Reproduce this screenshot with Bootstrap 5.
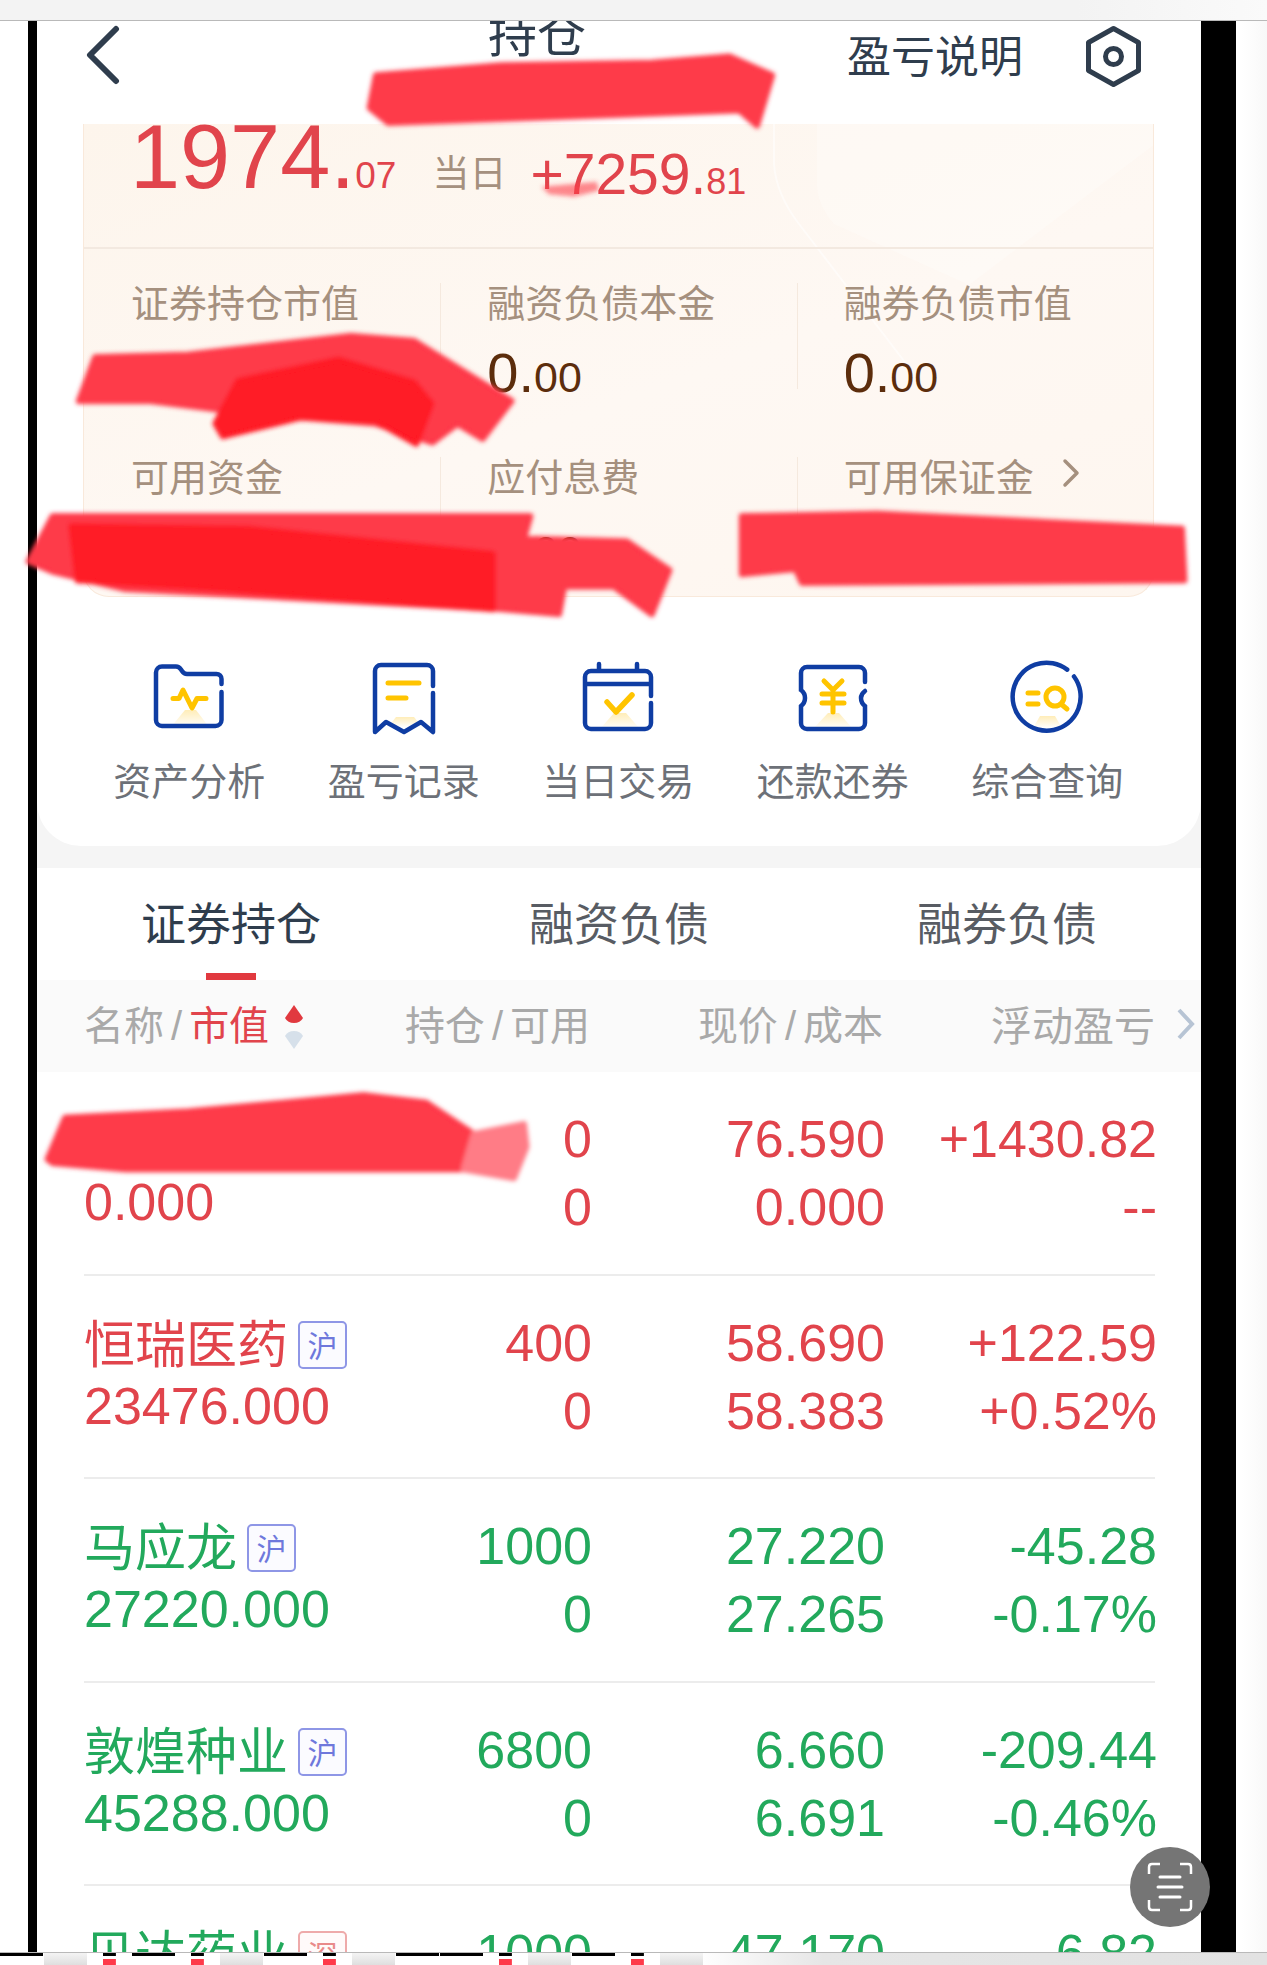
<!DOCTYPE html>
<html lang="en">
<head>
    <meta charset="UTF-8">
    <meta name="viewport" content="width=device-width, initial-scale=1.0">
    <title>持仓</title>
    <link href="https://cdn.jsdelivr.net/npm/bootstrap@5.3.1/dist/css/bootstrap.min.css" rel="stylesheet">
    <style>
        html, body { height: 100%; }
        body {
            width: 1267px;
            height: 1965px;
            overflow: hidden;
            background: #fff;
            font-family: "Liberation Sans", "Noto Sans CJK SC", sans-serif;
            font-weight: 400;
            position: relative;
        }
        .cjk { font-family: "Noto Sans CJK SC", sans-serif; font-weight: 400; }

        .strip-top { height: 21px; background: linear-gradient(90deg, #f3f3f3 85%, #fafafa 100%); border-bottom: 1px solid #b9b9b9; }
        .shell { height: 1931px; padding-left: 28px; background: linear-gradient(90deg, #fff 98%, #f8f8f8 100%); }
        .phone { width: 1173px; height: 1931px; border-left: 9px solid #000; overflow: hidden; background: #fff; }
        .edge { width: 35px; background: #000; }
        .strip-bottom { height: 13px; background: linear-gradient(90deg, #fff 55%, #e6e6e6 65%, #e2e2e2 100%); border-top: 1px solid #b9b9b9; overflow: hidden; }
        .thumb { width: 43px; height: 13px; background: linear-gradient(180deg, #000 0 3px, #fff 3px); flex: none; margin-right: 1px; }
        .thumb-red { background: linear-gradient(180deg, #000 0 3px, #fff 3px 6px, #fe3a4a 6px); background-size: 30% 100%; background-repeat: no-repeat; background-position: center; background-color: #fff; }
        .thumb-pale { background: linear-gradient(180deg, #f4f4f4, #ddd); }

        .top-head { height: 103px; color: #2f3d4d; padding-left: 48px; background: #fff; }
        .page-name { width: 98px; margin-left: 367px; margin-top: -26px; font-size: 49px; line-height: 72px; text-align: center; }
        .head-link { margin-left: 261px; font-size: 44px; line-height: 66px; margin-top: 0; white-space: nowrap; }
        .hex-ico { margin-left: 62px; }

        .wealth { width: 1071px; height: 473px; margin-left: 46px; border: 1px solid #f9e9db; border-top: 0; border-radius: 0 0 26px 26px; background: linear-gradient(160deg, #fdf5ec 0%, #fef8f3 55%, #fef6ef 100%); overflow: hidden; }
        .wealth-deco { position: absolute; left: 0; top: 0; }
        .wealth-top { height: 125px; border-bottom: 2px solid #f3e9e0; padding-left: 46px; overflow: hidden; white-space: nowrap; color: #e1444c; position: relative; }
        .profit { line-height: 88px; margin-top: -11px; }
        .big-a { font-size: 90px; }
        .big-b { font-size: 37px; }
        .day-tag { font-size: 37px; color: #a5907e; margin: 0 24px 0 36px; vertical-align: 1px; }
        .mid-a { font-size: 57px; vertical-align: -6px; }
        .mid-b { font-size: 36px; vertical-align: -6px; }

        .stat { height: 174px; padding-top: 33px; position: relative; }
        .stat-line { position: absolute; left: 0; top: 34px; height: 106px; border-left: 1px solid #f5e9de; }
        .stat-label { padding-left: 47px; font-size: 38px; line-height: 38px; color: #a5907e; white-space: nowrap; }
        .stat-num { padding-left: 47px; margin-top: 18px; font-size: 56px; line-height: 70px; color: #5c2d0c; }
        .stat-num small { font-size: 43px; }
        .stat-arrow { margin-left: 28px; vertical-align: 3px; }

        .tools { height: 249px; padding: 60px 44px 0 45px; background: #fff; border-radius: 0 0 44px 44px; position: relative; }
        .tools-wrap { background: #f5f5f5; padding-bottom: 22px; }
        .tool { width: 214.5px; }
        .tool-name { margin-top: 18px; font-size: 38px; line-height: 48px; color: #6d7178; }

        .tab-row { height: 112px; position: relative; }
        .tab-item { width: 388.5px; text-align: center; padding-top: 21px; font-size: 45px; line-height: 66px; color: #585c63; }
        .tab-on { color: #2f3d4d; position: relative; }
        .tab-on::after { content: ""; position: absolute; left: 169px; top: 105px; width: 50px; height: 7px; background: #e1393f; }

        .pos-grid { display: grid; grid-template-columns: 318px 190px 293px 272px; }
        .pos-head { height: 92px; background: #fafafa; padding-left: 47px; padding-bottom: 4px; align-items: center; font-size: 40px; color: #a9a9a9; }
        .pos-head .r { text-align: right; white-space: nowrap; padding-right: 2px; }
        .pos-head .r-wide { font-size: 41px; }
        .pos-head i { font-style: normal; margin: 0 7px; font-family: "Liberation Sans", sans-serif; }
        .cur-sort { color: #e1444c; }
        .sort-ico { margin-left: 14px; vertical-align: -9px; }
        .pos-head > div { position: relative; white-space: nowrap; }
        .more-ico { position: absolute; right: -39px; top: 14px; }

        .pos-row { height: 203.6px; margin: 0 46px 0 47px; padding-top: 33px; border-bottom: 2px solid #ececec; font-size: 52px; line-height: 68px; text-align: right; }
        .pos-row > div { white-space: nowrap; }
        .pos-row > div:first-child { text-align: left; }
        .up { color: #e1444c; }
        .down { color: #22a95c; }
        .stock { font-family: "Noto Sans CJK SC", sans-serif; font-weight: 400; font-size: 51px; height: 63px; line-height: 64px; }
        .mkt { display: inline-block; width: 49px; height: 48px; margin-left: 10px; border: 2px solid #8e96e6; border-radius: 5px; color: #6f78dc; font-size: 30px; line-height: 42px; text-align: center; vertical-align: 6px; background: #fbfbff; }
        .mkt-sz { border-color: #eeaaaa; color: #e98a8a; background: #fffafa; }

        .scan-btn { position: absolute; left: 1130px; top: 1847px; width: 80px; height: 80px; border-radius: 50%; background: #757575; }
        .ink { position: absolute; left: 0; top: 0; width: 1267px; height: 1965px; pointer-events: none; }
        .ink path { stroke-width: 5; stroke-linejoin: round; }
    </style>
</head>
<body>
    <div class="strip-top"></div>
    <div class="shell d-flex">
        <div class="phone">
            <!-- title bar -->
            <div class="top-head d-flex align-items-start">
                <svg class="mt-1" width="36" height="60" viewBox="0 0 36 60"><path d="M31 4 L5 30 L31 56" fill="none" stroke="#2f3d4d" stroke-width="6" stroke-linecap="round" stroke-linejoin="round"/></svg>
                <div class="page-name cjk">持仓</div>
                <div class="head-link cjk">盈亏说明</div>
                <svg class="hex-ico mt-1" width="57" height="63" viewBox="0 0 57 63"><path d="M28.5 3.5 L53.500 17.500 V45.500 L28.500 59.500 L3.500 45.500 V17.500 Z" fill="none" stroke="#2f3d4d" stroke-width="5" stroke-linejoin="round"/><circle cx="28.500" cy="31.500" r="8" fill="none" stroke="#2f3d4d" stroke-width="5"/></svg>
            </div>

            <!-- summary card -->
            <div class="wealth position-relative">
                <svg class="wealth-deco" width="1071" height="300" viewBox="0 0 1071 300"><path d="M733 0 V60 Q733 80 750 100 L885 161 L1071 20 V0 Z" fill="#fffdfb" opacity=".4"/><path d="M690 0 V40 Q692 70 715 100 L830 250" fill="none" stroke="#fff" stroke-width="2" opacity=".5"/></svg>
                <div class="wealth-top">
                    <div class="profit"><span class="big-a">1974.</span><span class="big-b">07</span><span class="day-tag cjk">当日</span><span class="mid-a">+7259.</span><span class="mid-b">81</span></div>
                </div>
                <div class="row g-0 position-relative">
                    <div class="col-4 stat">
                        <div class="stat-label cjk">证券持仓市值</div>
                    </div>
                    <div class="col-4 stat">
                        <div class="stat-line"></div>
                        <div class="stat-label cjk">融资负债本金</div>
                        <div class="stat-num">0.<small>00</small></div>
                    </div>
                    <div class="col-4 stat">
                        <div class="stat-line"></div>
                        <div class="stat-label cjk">融券负债市值</div>
                        <div class="stat-num">0.<small>00</small></div>
                    </div>
                    <div class="col-4 stat">
                        <div class="stat-label cjk">可用资金</div>
                    </div>
                    <div class="col-4 stat">
                        <div class="stat-line"></div>
                        <div class="stat-label cjk">应付息费</div>
                        <div class="stat-num">0.<small>00</small></div>
                    </div>
                    <div class="col-4 stat">
                        <div class="stat-line"></div>
                        <div class="stat-label cjk">可用保证金<svg class="stat-arrow" width="18" height="30" viewBox="0 0 18 30"><path d="M3 3 L15 15 L3 27" fill="none" stroke="#a5907e" stroke-width="3.500" stroke-linecap="round" stroke-linejoin="round"/></svg></div>
                    </div>
                </div>
            </div>

            <div class="tools-wrap">
                <!-- shortcuts -->
                <div class="tools d-flex">
                    <svg width="0" height="0" class="position-absolute"><defs><linearGradient id="fade" x1="0" y1="0" x2="0" y2="1"><stop offset="0" stop-color="#ffedb8"/><stop offset="1" stop-color="#fff"/></linearGradient></defs></svg>
                    <div class="tool text-center">
                        <svg width="80" height="80" viewBox="0 0 80 80"><path d="M22 70 L36 53 H47 L60 70 Z" fill="url(#fade)"/><path d="M72.500 27 V22 a5 5 0 0 0 -5 -5 H38 q-3 0 -5 -3 l-1 -1.500 q-2 -3 -5 -3 H13 a6 6 0 0 0 -6 6 V63 a6 6 0 0 0 6 6 H66.500 a6 6 0 0 0 6 -6 V35" fill="none" stroke="#0f3da3" stroke-width="4.500" stroke-linecap="round"/><path d="M24 41.500 H30 L34 33 L43 51 L48 41.500 H57" fill="none" stroke="#ffc400" stroke-width="5" stroke-linejoin="round" stroke-linecap="round"/></svg>
                        <div class="tool-name cjk">资产分析</div>
                    </div>
                    <div class="tool text-center">
                        <svg width="80" height="80" viewBox="0 0 80 80"><path d="M24 70 L32 60 H50 L58 70 Z" fill="url(#fade)"/><path d="M69 29 V14 a6 6 0 0 0 -6 -6 H17 a6 6 0 0 0 -6 6 V75 L22 65 L40 75 L57 65 L69 75 V36" fill="none" stroke="#0f3da3" stroke-width="4.500" stroke-linecap="round" stroke-linejoin="round"/><path d="M24 26 H55 M24 41 H42" fill="none" stroke="#ffc400" stroke-width="5" stroke-linecap="round"/></svg>
                        <div class="tool-name cjk">盈亏记录</div>
                    </div>
                    <div class="tool text-center">
                        <svg width="80" height="80" viewBox="0 0 80 80"><path d="M22 72 L36 56 H48 L62 72 Z" fill="url(#fade)"/><path d="M73 39 V20 a6 6 0 0 0 -6 -6 H13 a6 6 0 0 0 -6 6 V66 a6 6 0 0 0 6 6 H67 a6 6 0 0 0 6 -6 V46 M21 7 V14 M59 7 V14 M7 27 H73" fill="none" stroke="#0f3da3" stroke-width="4.500" stroke-linecap="round"/><path d="M29 45 L38 55 L54 38" fill="none" stroke="#ffc400" stroke-width="5.500" stroke-linecap="round" stroke-linejoin="round"/></svg>
                        <div class="tool-name cjk">当日交易</div>
                    </div>
                    <div class="tool text-center">
                        <svg width="80" height="80" viewBox="0 0 80 80"><path d="M20 72 L35 56 H46 L60 72 Z" fill="url(#fade)"/><path d="M72 25 V16 a6 6 0 0 0 -6 -6 H14 a6 6 0 0 0 -6 6 V33 q4 3 4 8 t-4 8 V66 a6 6 0 0 0 6 6 H66 a6 6 0 0 0 6 -6 V49 q-4 -3 -4 -8 q0 -4 4 -7" fill="none" stroke="#0f3da3" stroke-width="4.500" stroke-linecap="round"/><path d="M31 24 L40 33 L49 24 M40 33 V55 M29 37 H51 M29 46 H51" fill="none" stroke="#ffc400" stroke-width="5" stroke-linecap="round" stroke-linejoin="round"/></svg>
                        <div class="tool-name cjk">还款还券</div>
                    </div>
                    <div class="tool text-center">
                        <svg width="80" height="80" viewBox="0 0 80 80"><path d="M26 71 L33 59 H48 L55 71 Z" fill="url(#fade)"/><path d="M67 19.500 A34 34 0 1 1 60.200 12.600" fill="none" stroke="#0f3da3" stroke-width="4.500" stroke-linecap="round"/><path d="M21 36 H31 M21 47 H31" fill="none" stroke="#ffc400" stroke-width="5" stroke-linecap="round"/><circle cx="48" cy="40" r="9" fill="none" stroke="#ffc400" stroke-width="5"/><path d="M54 47 L60 52" stroke="#ffc400" stroke-width="5" stroke-linecap="round"/></svg>
                        <div class="tool-name cjk">综合查询</div>
                    </div>
                </div>
            </div>

            <!-- tabs -->
            <div class="tab-row d-flex cjk">
                <div class="tab-item tab-on">证券持仓</div>
                <div class="tab-item">融资负债</div>
                <div class="tab-item">融券负债</div>
            </div>

            <!-- positions -->
            <div class="pos-grid pos-head cjk">
                <div>名称<i>/</i><span class="cur-sort">市值</span><svg class="sort-ico" width="22" height="44" viewBox="0 0 22 44"><path d="M11 0 L20 13 A10 9 0 0 1 2 13 Z" fill="#e1393f"/><path d="M11 44 L20 31 A10 9 0 0 0 2 31 Z" fill="#d6e0ea"/></svg></div>
                <div class="r">持仓<i>/</i>可用</div>
                <div class="r">现价<i>/</i>成本</div>
                <div class="r r-wide">浮动盈亏<svg class="more-ico" width="20" height="34" viewBox="0 0 20 34"><path d="M3 3 L16 17 L3 31" fill="none" stroke="#b7c4d4" stroke-width="4"/></svg></div>
            </div>

            <div class="pos-grid pos-row up">
                <div><div class="stock"></div><div>0.000</div></div>
                <div>0<br>0</div>
                <div>76.590<br>0.000</div>
                <div>+1430.82<br>--</div>
            </div>
            <div class="pos-grid pos-row up">
                <div><div class="stock">恒瑞医药<span class="mkt">沪</span></div><div>23476.000</div></div>
                <div>400<br>0</div>
                <div>58.690<br>58.383</div>
                <div>+122.59<br>+0.52%</div>
            </div>
            <div class="pos-grid pos-row down">
                <div><div class="stock">马应龙<span class="mkt">沪</span></div><div>27220.000</div></div>
                <div>1000<br>0</div>
                <div>27.220<br>27.265</div>
                <div>-45.28<br>-0.17%</div>
            </div>
            <div class="pos-grid pos-row down">
                <div><div class="stock">敦煌种业<span class="mkt">沪</span></div><div>45288.000</div></div>
                <div>6800<br>0</div>
                <div>6.660<br>6.691</div>
                <div>-209.44<br>-0.46%</div>
            </div>
            <div class="pos-grid pos-row down">
                <div><div class="stock">贝达药业<span class="mkt mkt-sz">深</span></div></div>
                <div>1000</div>
                <div>47.170</div>
                <div>-6.82</div>
            </div>
        </div>
        <div class="edge"></div>
    </div>
    <div class="strip-bottom d-flex">
        <div class="thumb"></div><div class="thumb thumb-pale"></div><div class="thumb thumb-red"></div><div class="thumb"></div><div class="thumb thumb-red"></div><div class="thumb thumb-pale"></div><div class="thumb"></div><div class="thumb thumb-red"></div><div class="thumb thumb-pale"></div><div class="thumb"></div><div class="thumb"></div><div class="thumb thumb-red"></div><div class="thumb thumb-pale"></div><div class="thumb"></div><div class="thumb thumb-red"></div><div class="thumb thumb-pale"></div>
    </div>

    <!-- floating scan button -->
    <div class="scan-btn d-flex align-items-center justify-content-center">
        <svg width="46" height="50" viewBox="0 0 46 50"><path d="M2 12 V5 Q2 2 5 2 H13 M33 2 H41 Q44 2 44 5 V12 M2 38 V45 Q2 48 5 48 H13 M33 48 H41 Q44 48 44 45 V38" fill="none" stroke="#fff" stroke-width="2.500"/><path d="M13 15 H33 M11 25 H35 M13 35 H33" stroke="#fff" stroke-width="3" stroke-linecap="round"/></svg>
    </div>

    <!-- hand-drawn red marks over the screenshot -->
    <svg class="ink" viewBox="0 0 1011 1568" preserveAspectRatio="none">
        <defs><filter id="soft"><feGaussianBlur stdDeviation="1.800"/></filter></defs>
        <g filter="url(#soft)">
            <path d="M300 60 L400 52 L520 50 L582 45 L616 60 L604 100 L590 88 L480 92 L310 98 L295 86 Z" fill="#fe3a4a" stroke="#fe3a4a"/>
            <path d="M432 149 L476 145 L478 152 L458 157 L438 155 Z" fill="#fe3a4a" opacity=".6"/>
            <path d="M63 320 L76 285 L150 283 L280 268 L330 272 L408 320 L385 350 L365 338 L345 353 L300 338 L200 330 L120 320 Z" fill="#fe3a4a" stroke="#fe3a4a"/>
            <path d="M172 338 L190 304 L270 287 L330 305 L344 322 L332 354 L300 336 L240 333 L178 348 Z" fill="#ff1a25" stroke="#ff1a25"/>
            <path d="M23 448 L42 412 L423 412 L418 430 L500 432 L534 455 L520 490 L490 468 L450 468 L446 490 L400 486 L100 470 L42 456 Z" fill="#fe3a4a" stroke="#fe3a4a"/>
            <path d="M57 420 L200 422 L393 442 L393 486 L150 468 L62 463 Z" fill="#ff1a25" stroke="#ff1a25"/>
            <path d="M592 412 L700 410 L943 422 L945 463 L640 465 L635 454 L592 458 Z" fill="#fe3a4a" stroke="#fe3a4a"/>
            <path d="M38 925 L52 892 L150 887 L290 874 L340 880 L378 905 L370 933 L100 933 L42 928 Z" fill="#fe3a4a" stroke="#fe3a4a"/>
            <path d="M378 905 L418 897 L420 915 L410 940 L370 933 Z" fill="#ff7c86" stroke="#ff7c86"/>
        </g>
    </svg>

    <script src="https://cdn.jsdelivr.net/npm/bootstrap@5.3.1/dist/js/bootstrap.bundle.min.js"></script>
</body>
</html>
